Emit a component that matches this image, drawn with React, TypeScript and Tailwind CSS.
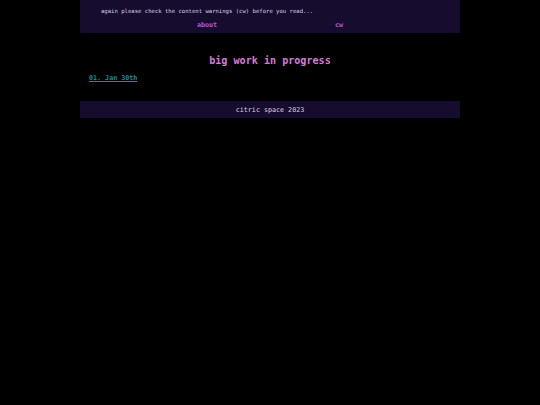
import React from "react";

const mono = { fontFamily: '"DejaVu Sans Mono", "Liberation Mono", monospace' };

export default function App() {
  return (
    <div className="min-h-screen w-full bg-black" style={mono}>
      <div className="mx-auto w-[380px]">
        <header className="h-[33px] bg-[#160c2e] pt-[8px]">
          <p className="pl-[21px] text-[5.6px] leading-[7px] text-[#d8d0e4]">
            again please check the content warnings (cw) before you read...
          </p>
          <nav className="mt-[6px] flex justify-center pl-[6px] text-[6.7px] font-bold leading-[8px] text-[#c055d0]">
            <a className="w-[132px] text-center">about</a>
            <a className="w-[132px] text-center">cw</a>
          </nav>
        </header>

        <main className="pt-[22px] pb-[19px]">
          <h1 className="text-center text-[10.1px] font-bold leading-[12px] text-[#d47ad8]">
            big work in progress
          </h1>
          <a className="ml-[9px] mt-[7px] block w-fit text-[6.7px] font-bold leading-[8px] text-[#1b9090] underline">
            01. Jan 30th
          </a>
        </main>

        <footer className="flex h-[17px] items-center justify-center bg-[#160c2e] text-[6.7px] leading-[8px] text-[#dcd2ea]">
          citric space 2023
        </footer>
      </div>
    </div>
  );
}
